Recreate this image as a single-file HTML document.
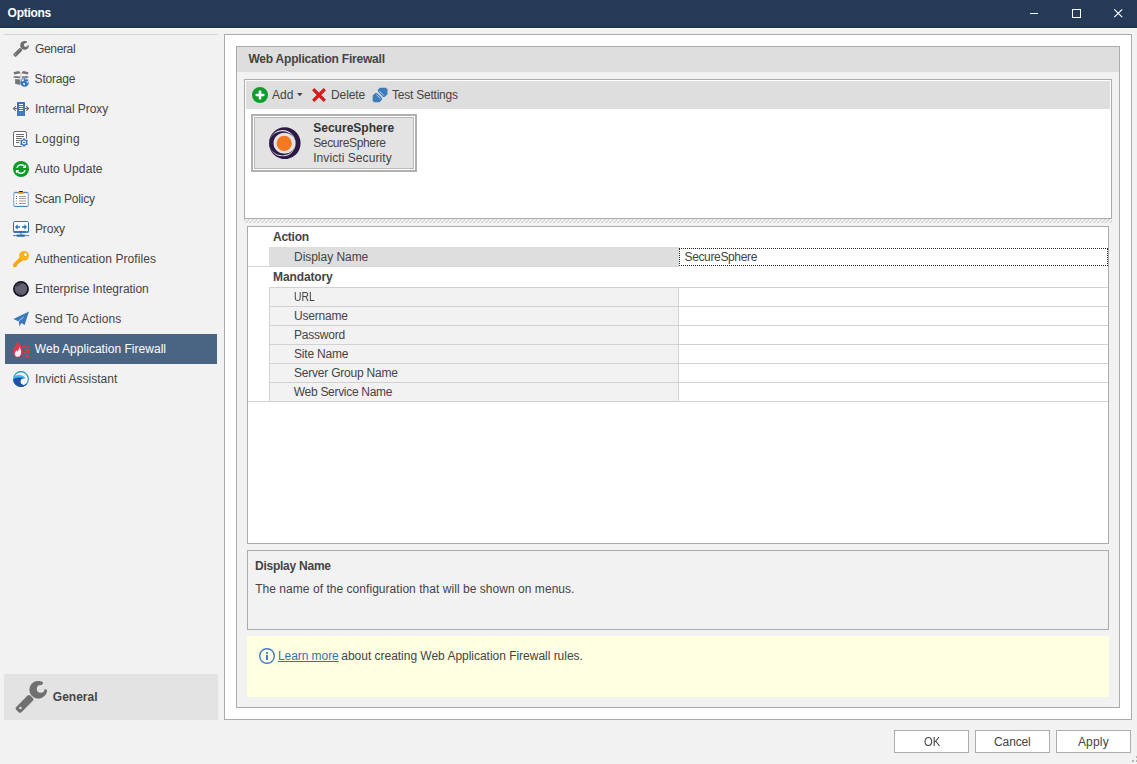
<!DOCTYPE html>
<html><head><meta charset="utf-8"><title>Options</title>
<style>
html,body{margin:0;padding:0;background:#f2f2f2}
body{width:1137px;height:764px;position:relative;overflow:hidden;background:#f2f2f2;font:12px/14px "Liberation Sans",sans-serif}
div,span,svg{position:absolute;box-sizing:border-box}
.t{white-space:pre;font:12px/14px "Liberation Sans",sans-serif}
.b{border:1px solid #ababab}
.btn{border:1px solid #adadad;background:#fff;width:75px;height:23px;top:730px}
.hl{height:1px;background:#d2d2d2}
</style></head>
<body>
<div style="left:0;top:0;width:1137px;height:27px;background:#253a57"></div>
<div style="left:0;top:27px;width:1137px;height:1px;background:#15304f"></div>
<div style="left:0;top:28px;width:1137px;height:1px;background:#fdfdfd"></div>
<div style="left:4px;top:34px;width:214px;height:1px;background:#d4d4d4"></div>
<div style="left:5px;top:334px;width:212px;height:30px;background:#4a6584"></div>
<div style="left:4px;top:674px;width:214px;height:46px;background:#e3e3e3"></div>
<div class="b" style="left:224px;top:34px;width:908px;height:686px;background:#fff"></div>
<div class="b" style="left:236px;top:46px;width:884px;height:662px;background:#f2f2f2"></div>
<div style="left:237px;top:47px;width:882px;height:25px;background:#dedede"></div>
<div class="b" style="left:244px;top:79px;width:868px;height:140px;background:#fff"></div>
<div style="left:246px;top:81px;width:864px;height:28px;background:#dedede"></div>
<div style="left:251px;top:114px;width:166px;height:58px;border:2px solid #b0b0b0;background:#fff"></div>
<div style="left:254px;top:117px;width:160px;height:52px;border:1px solid #b8b8b8;background:#e3e3e3"></div>
<svg style="left:244px;top:219px" width="868" height="4" shape-rendering="crispEdges"><defs><pattern id="hp" width="4" height="4" patternUnits="userSpaceOnUse"><g fill="#d8d8d8"><rect x="0" y="0" width="2" height="1"/><rect x="3" y="1" width="2" height="1"/><rect x="-1" y="1" width="2" height="1"/><rect x="2" y="2" width="2" height="1"/><rect x="1" y="3" width="2" height="1"/></g></pattern></defs><rect width="868" height="4" fill="url(#hp)"/></svg>
<div class="b" style="left:247px;top:226px;width:862px;height:318px;background:#fff"></div>
<div style="left:269px;top:247px;width:410px;height:19px;background:#dedede"></div>
<div class="hl" style="left:248px;top:266px;width:431px;background:#d6d6d6"></div>
<div style="left:679px;top:248px;width:429px;height:18px;border:1px dotted #222"></div>
<div style="left:269px;top:287px;width:410px;height:114px;background:#f2f2f2;border-left:1px solid #d2d2d2;border-right:1px solid #d2d2d2"></div>
<div class="hl" style="left:269px;top:287px;width:839px"></div>
<div class="hl" style="left:269px;top:306px;width:839px"></div>
<div class="hl" style="left:269px;top:325px;width:839px"></div>
<div class="hl" style="left:269px;top:344px;width:839px"></div>
<div class="hl" style="left:269px;top:363px;width:839px"></div>
<div class="hl" style="left:269px;top:382px;width:839px"></div>
<div class="hl" style="left:248px;top:401px;width:860px"></div>
<div class="b" style="left:247px;top:550px;width:862px;height:80px;background:#f2f2f2"></div>
<div style="left:247px;top:636px;width:862px;height:61px;background:#ffffe1"></div>
<div class="btn" style="left:894px"></div>
<div class="btn" style="left:975px"></div>
<div class="btn" style="left:1056px"></div>
<div style="left:1132px;top:760px;width:2px;height:2px;background:#b4b4b4"></div>
<div style="left:1136px;top:760px;width:1px;height:2px;background:#b4b4b4"></div>
<div style="left:1136px;top:756px;width:1px;height:2px;background:#b4b4b4"></div>
<svg style="left:13px;top:41px" width="16" height="16" viewBox="0 0 16 16"><defs><mask id="wm1"><rect x="-1" y="-1" width="18" height="18" fill="#fff"/><circle cx="12.85" cy="3.9" r="1.95" fill="#000"/><path d="M12.86 3.16 L14.8 -0.65 L18 -1 L17.2 5.03 Z" fill="#000"/></mask></defs>
<g fill="#6f6f6f"><circle cx="11.6" cy="4.4" r="4.45" mask="url(#wm1)"/>
<rect x="0" y="-1.86" width="10" height="3.72" rx="1" transform="translate(8.3 7.9) rotate(135)"/></g>
<circle cx="2.7" cy="13.5" r="0.5" fill="#c4c4c4"/></svg>
<svg style="left:13px;top:71px" width="16" height="16" viewBox="0 0 16 16"><g fill="#757575">
<path d="M0.5 1.3 L5.4 0.1 L7.1 1 L7 2.5 L1.3 3.5 Z"/><path d="M15.5 1.3 L10.6 0.1 L8.9 1 L9 2.5 L14.7 3.5 Z"/>
<path d="M-0.1 6.1 L2.2 4.9 L7.1 5.6 L6.8 7.2 L1.5 6.7 Z"/><path d="M16.1 6.1 L13.8 4.9 L8.9 5.6 L9.2 7.2 L14.5 6.7 Z"/>
<path d="M2.1 7.9 L7.1 8.6 L7.1 14 L2.1 12.7 Z"/><path d="M8.9 8.6 L13.9 7.9 L13.9 12 L8.9 14 Z" fill="#8a8a8a"/>
</g>
<path d="M2.4 3.6 L7.6 2.7 L8.4 2.7 L13.6 3.6 L8 4.9 Z" fill="#fdfdfd"/>
<path d="M7.4 1.2 L8.6 1.2 L8.6 14 L7.4 14 Z" fill="#c9c9c9"/>
<circle cx="11.55" cy="11.4" r="4.7" fill="#e4edf7"/>
<circle cx="11.55" cy="11.4" r="4.25" fill="#3674bb"/>
<path d="M8.3 9.4 L10.7 8 L11.2 9.4 L9 10.6 Z M13.4 10.6 L15.4 9.8 L15.7 11.3 L13.8 11.8 Z M10 11.8 L11.9 12.2 L11.9 14.2 L10.4 13.8 Z M12 7.6 L13.6 8 L12.8 9 Z" fill="#f2f6fb"/></svg>
<svg style="left:13px;top:101px" width="16" height="16" viewBox="0 0 16 16"><rect x="3.6" y="0.6" width="8.8" height="14.8" rx="0.8" fill="#fbf6ee"/>
<rect x="4" y="1" width="8" height="14" rx="0.6" fill="#3775b5"/>
<rect x="4.6" y="10.6" width="6.8" height="3.8" fill="#427fbb"/>
<g fill="#fff"><rect x="6" y="3" width="4" height="1"/><rect x="6" y="5" width="4" height="1"/><rect x="6" y="7" width="4" height="1"/><rect x="6" y="9" width="4" height="1"/></g>
<g stroke="#6b6b6b" stroke-width="1.1" fill="none" stroke-linecap="round" stroke-linejoin="round"><path d="M0.4 7.5 H4 M2.4 5.6 L0.5 7.5 L2.4 9.4"/><path d="M15.6 7.5 H12 M13.6 5.6 L15.5 7.5 L13.6 9.4"/></g></svg>
<svg style="left:13px;top:131px" width="16" height="16" viewBox="0 0 16 16"><rect x="0.5" y="0.5" width="13" height="15" rx="1.6" fill="#fff" stroke="#6a6a6a" stroke-width="1"/>
<g fill="#6a6a6a"><rect x="3" y="3" width="8" height="1"/><rect x="3" y="5" width="8" height="1"/><rect x="3" y="7" width="6" height="1"/><rect x="3" y="9" width="4" height="1"/><rect x="3" y="11" width="4" height="1"/></g>
<circle cx="11" cy="11.4" r="4.6" fill="#f6f6f6"/>
<g fill="#2f72b8"><circle cx="11" cy="11.4" r="3.2"/>
<rect x="10.1" y="7.2" width="1.8" height="8.4" rx="0.5"/>
<rect x="10.1" y="7.2" width="1.8" height="8.4" rx="0.5" transform="rotate(60 11 11.4)"/>
<rect x="10.1" y="7.2" width="1.8" height="8.4" rx="0.5" transform="rotate(120 11 11.4)"/></g>
<circle cx="11" cy="11.4" r="2.1" fill="#eaf0f7"/><ellipse cx="11" cy="11.4" rx="1" ry="0.6" fill="#2f72b8"/></svg>
<svg style="left:13px;top:161px" width="16" height="16" viewBox="0 0 16 16"><circle cx="8" cy="8" r="8" fill="#0b9c24"/>
<g fill="none" stroke="#fff" stroke-width="1.5"><path d="M3.9 6.8 A4.3 4.3 0 0 1 11.6 5.6"/><path d="M12.1 9.2 A4.3 4.3 0 0 1 4.4 10.4"/></g>
<path d="M13.1 3.6 L13.1 7 L9.7 7 Z" fill="#fff"/><path d="M2.9 12.4 L2.9 9 L6.3 9 Z" fill="#fff"/></svg>
<svg style="left:13px;top:191px" width="16" height="16" viewBox="0 0 16 16"><rect x="0.65" y="1.5" width="14.7" height="14" rx="1.5" fill="#fffdfb" stroke="#93b3da" stroke-width="1.3"/>
<path d="M1.6 1.5 H14.4" stroke="#4b84c4" stroke-width="1.1"/><path d="M1.6 15.5 H14.4" stroke="#4b84c4" stroke-width="1.1"/>
<rect x="5" y="0.9" width="5.8" height="1.9" fill="#d9991c"/><rect x="6" y="0" width="3.8" height="1.1" rx="0.4" fill="#1a1a1a"/>
<g fill="#9a9a9a"><rect x="6" y="5" width="7" height="1"/><rect x="6" y="7" width="7" height="1"/><rect x="6" y="12" width="7" height="1"/></g>
<rect x="6" y="9" width="7" height="2" fill="#cfcfcf"/><rect x="3" y="9" width="1" height="2" fill="#d4d4d4"/>
<g fill="#6a6a6a"><rect x="3" y="5" width="1" height="1"/><rect x="3" y="7" width="1" height="1"/><rect x="3" y="12" width="1" height="1"/></g></svg>
<svg style="left:13px;top:221px" width="16" height="16" viewBox="0 0 16 16"><rect x="0.5" y="0.5" width="15" height="11" rx="1.3" fill="#fbf9f6" stroke="#3472b6" stroke-width="1"/>
<rect x="0.5" y="10" width="15" height="1.8" rx="0.8" fill="#3472b6"/>
<rect x="13.2" y="10.3" width="0.6" height="1.2" fill="#dfe8f3"/>
<g fill="#2f6db3"><path d="M2 6 L4.6 3.2 L4.6 5.2 L7 5.2 L7 6.8 L4.6 6.8 L4.6 8.8 Z"/><path d="M14 6 L11.4 3.2 L11.4 5.2 L9 5.2 L9 6.8 L11.4 6.8 L11.4 8.8 Z"/>
<rect x="7.5" y="11.5" width="1" height="2.2"/><rect x="3.4" y="13.4" width="8.6" height="2.4" rx="1.2"/><rect x="0" y="14.2" width="16" height="0.9"/></g></svg>
<svg style="left:13px;top:251px" width="16" height="16" viewBox="0 0 16 16"><path d="M6.5 6.6 L9.4 9.2 L8 10.6 L7.2 10.4 L6.4 12 L5.6 12 L4.8 13.6 L3.8 13.8 L3.2 15.9 L0.1 15.9 L0.1 13.0 Z" fill="#f6a80f"/>
<path d="M9.4 9.2 L8 10.6 L7.2 10.4 L6.4 12 L5.6 12 L4.8 13.6 L3.8 13.8 L3.2 15.9 L1.8 15.9 L8.6 8.5 Z" fill="#e2930a"/>
<circle cx="11.05" cy="4.85" r="4.95" fill="#fdb216"/>
<circle cx="12.4" cy="3.6" r="1.95" fill="#e6a51c"/><circle cx="12.45" cy="3.55" r="1.5" fill="#f8f8fc"/></svg>
<svg style="left:13px;top:281px" width="16" height="16" viewBox="0 0 16 16"><circle cx="8" cy="8" r="7.95" fill="#15142a"/><circle cx="8" cy="8" r="6.2" fill="#62616f"/>
<path d="M2.6 5 A6.2 6.2 0 0 1 9.2 1.9 L9.2 2.8 L3.4 5.9 Z" fill="#403e4e"/><path d="M2.8 11.2 L8.8 13 L8.8 14.1 A6.2 6.2 0 0 1 2.8 11.2 Z" fill="#494756"/></svg>
<svg style="left:13px;top:311px" width="16" height="16" viewBox="0 0 16 16"><path d="M16 0.6 L0.4 7.9 L4.6 9.9 L6.0 10.4 L6.3 15.3 L8.6 12.0 L11.6 14.0 Z" fill="#3b78b9"/>
<path d="M5.6 10.2 L10.6 5.9" stroke="#c6d8ec" stroke-width="0.9"/></svg>
<svg style="left:13px;top:341px" width="16" height="16" viewBox="0 0 16 16"><path d="M4.5 0.2 C5.4 2.2 7.6 3.6 8.8 6.2 C10.4 9.4 9.9 13.2 7.2 15.4 C5.6 16.2 3.2 16.2 1.8 15.2 C-0.4 13.4 -0.6 10.2 0.8 7.6 C2.2 5.2 3.6 3.2 4.5 0.2 Z" fill="#e8344b"/>
<path d="M6.6 5.8 C7.6 8 8.4 10.4 8 12.6 C7.7 14.4 6.6 15.7 5 15.8 C3.4 15.9 2 14.9 1.8 13.2 C1.6 11.6 2.6 10.4 3.4 9.2 L4.5 10.8 C5.3 9.2 6.2 7.8 6.6 5.8 Z" fill="#f3f5f6"/>
<g fill="#ff2b3d"><rect x="9.6" y="5" width="3.4" height="1.9"/><rect x="14.1" y="5" width="1.9" height="1.9"/><rect x="12" y="8" width="4" height="1.9"/><rect x="11.1" y="11" width="1.9" height="1.9"/><rect x="14.1" y="11" width="1.9" height="1.9"/><rect x="12" y="14" width="4" height="1.9"/><rect x="9.8" y="14.8" width="1.1" height="1.1"/></g></svg>
<svg style="left:13px;top:371px" width="16" height="16" viewBox="0 0 16 16"><defs><linearGradient id="wg" x1="0" y1="0" x2="0" y2="1"><stop offset="0" stop-color="#48d0f6"/><stop offset="0.55" stop-color="#1c7fd6"/><stop offset="1" stop-color="#1f4fa4"/></linearGradient>
<clipPath id="wc"><circle cx="8" cy="8" r="7.9"/></clipPath></defs>
<circle cx="8" cy="8" r="7.4" fill="#f4f4f4" stroke="#1f8cbd" stroke-width="1.1"/>
<g clip-path="url(#wc)"><path d="M-1 8 C1 4.6 4.4 3.4 7.6 4 C10 4.5 11.8 5.9 12.8 7.8 C10.6 6.8 8.4 7.6 7.6 9.4 C6.8 11.4 8 13.6 10.4 13.9 C12 14.1 13.4 13.4 14.4 12.4 L14 17 L-1 17 Z" fill="url(#wg)"/>
<path d="M-1 10 C1 7.4 4 6.4 7 6.6 C9 6.8 10.4 7 11.4 7.3 C9.4 7.3 8 8.2 7.6 9.4 C6.8 11.4 8 13.6 10.4 13.9 C12 14.1 13.4 13.4 14.4 12.4 L14 17 L-1 17 Z" fill="#2150a4"/></g></svg>
<svg style="left:15px;top:681px" width="32" height="32" viewBox="0 0 16 16"><defs><mask id="wm2"><rect x="-1" y="-1" width="18" height="18" fill="#fff"/><circle cx="12.85" cy="3.9" r="1.95" fill="#000"/><path d="M12.86 3.16 L14.8 -0.65 L18 -1 L17.2 5.03 Z" fill="#000"/></mask></defs>
<g fill="#707070"><circle cx="11.6" cy="4.4" r="4.45" mask="url(#wm2)"/>
<rect x="0" y="-1.86" width="10" height="3.72" rx="1" transform="translate(8.3 7.9) rotate(135)"/></g>
<circle cx="2.7" cy="13.5" r="0.6" fill="#e3e3e3"/></svg>
<svg style="left:252px;top:87px" width="16" height="16" viewBox="0 0 16 16"><circle cx="8" cy="8" r="8" fill="#0c9d2b"/><rect x="3.6" y="6.7" width="8.8" height="2.6" rx="0.6" fill="#fff"/><rect x="6.7" y="3.6" width="2.6" height="8.8" rx="0.6" fill="#fff"/></svg>
<svg style="left:297px;top:93px" width="6" height="4" viewBox="0 0 6 4"><path d="M0 0 L5.6 0 L2.8 3.2 Z" fill="#444"/></svg>
<svg style="left:312px;top:88px" width="14" height="14" viewBox="0 0 14 14"><path d="M1.2 1.2 L12.8 12.8 M12.8 1.2 L1.2 12.8" stroke="#d61a1c" stroke-width="3.3"/></svg>
<svg style="left:372px;top:87px" width="16" height="16" viewBox="0 0 16 16"><path d="M7.8 0.7 L14.1 0.7 L15.5 2.3 L15.5 7.3 L12.6 10.1 L11 9.9 L5.9 4.6 L6.1 2.6 Z" fill="#3d7bb9"/>
<path d="M3.4 6.0 L5 6.0 L10.1 11.1 L9.9 12.7 L7.5 15.3 L2.2 15.3 L0.7 13.6 L0.7 8.6 Z" fill="#3d7bb9"/>
<path d="M7.6 4.4 L11.5 8.3 M4.5 7.7 L8.2 11.5" stroke="#b9d1ea" stroke-width="1" stroke-linecap="round"/>
<circle cx="14.6" cy="1.4" r="0.7" fill="#a9a9a0"/><circle cx="1.5" cy="14.8" r="0.7" fill="#a9a9a0"/></svg>
<svg style="left:259px;top:648px" width="16" height="16" viewBox="0 0 16 16"><circle cx="8" cy="8" r="7.3" fill="none" stroke="#3f7dc7" stroke-width="1.4"/><rect x="7" y="4" width="2" height="1.8" fill="#3f7dc7"/><rect x="7" y="6.9" width="2" height="5.1" fill="#3f7dc7"/></svg>
<svg style="left:268.7px;top:126.6px" width="32" height="32.4" viewBox="0 0 32 32.4"><path fill="#2c1a46" d="M15.8 0.1999999999999993 A15.8 16 0 1 1 15.8 32.2 A15.8 16 0 1 1 15.8 0.1999999999999993 Z M13.6 3.0999999999999996 A13.1 13.1 0 1 0 13.6 29.299999999999997 A13.1 13.1 0 1 0 13.6 3.0999999999999996 Z"/>
<path fill="#2c1a46" d="M13.4 4.200000000000001 A13.2 12.1 0 1 1 13.4 28.4 A13.2 12.1 0 1 1 13.4 4.200000000000001 Z M15.5 5.800000000000001 A11.0 10.5 0 1 0 15.5 26.8 A11.0 10.5 0 1 0 15.5 5.800000000000001 Z"/>
<circle cx="15.2" cy="16.4" r="7.65" fill="#f47820"/></svg>
<svg style="left:1025px;top:5px" width="105" height="18" viewBox="0 0 105 18"><g stroke="#fff" fill="none" stroke-width="1"><path d="M5 8.5 H13" /><rect x="47.5" y="4.5" width="8" height="8"/><path d="M89.3 4.3 L97.2 12.2 M97.2 4.3 L89.3 12.2" stroke-width="1.2"/></g></svg>
<span class="t" style="left:7.6px;top:6.2px;color:#ffffff;letter-spacing:-0.283px;font-weight:bold">Options</span>
<span class="t" style="left:35.1px;top:42px;color:#444444;letter-spacing:-0.367px">General</span>
<span class="t" style="left:34.6px;top:72px;color:#444444;letter-spacing:-0.183px">Storage</span>
<span class="t" style="left:35.0px;top:102px;color:#444444;letter-spacing:-0.062px">Internal Proxy</span>
<span class="t" style="left:35.0px;top:132px;color:#444444;letter-spacing:0.317px">Logging</span>
<span class="t" style="left:34.8px;top:162px;color:#444444;letter-spacing:0.1px">Auto Update</span>
<span class="t" style="left:34.6px;top:192px;color:#444444;letter-spacing:-0.24px">Scan Policy</span>
<span class="t" style="left:35.0px;top:222px;color:#444444;letter-spacing:-0.15px">Proxy</span>
<span class="t" style="left:34.8px;top:252px;color:#444444;letter-spacing:0.082px">Authentication Profiles</span>
<span class="t" style="left:35.1px;top:282px;color:#444444;letter-spacing:-0.052px">Enterprise Integration</span>
<span class="t" style="left:34.6px;top:312px;color:#444444;letter-spacing:0.05px">Send To Actions</span>
<span class="t" style="left:34.8px;top:342px;color:#ffffff;letter-spacing:0.03px">Web Application Firewall</span>
<span class="t" style="left:35.1px;top:372px;color:#444444;letter-spacing:0.012px">Invicti Assistant</span>
<span class="t" style="left:52.8px;top:690px;color:#444444;letter-spacing:-0.0px;font-weight:bold">General</span>
<span class="t" style="left:248.4px;top:52px;color:#444444;letter-spacing:-0.204px;font-weight:bold">Web Application Firewall</span>
<span class="t" style="left:272.0px;top:88px;color:#444444;letter-spacing:0.05px">Add</span>
<span class="t" style="left:331.1px;top:88px;color:#444444;letter-spacing:-0.14px">Delete</span>
<span class="t" style="left:391.9px;top:88px;color:#444444;letter-spacing:-0.217px">Test Settings</span>
<span class="t" style="left:313.2px;top:121px;color:#333333;letter-spacing:0.018px;font-weight:bold">SecureSphere</span>
<span class="t" style="left:313.2px;top:136px;color:#444444;letter-spacing:-0.355px">SecureSphere</span>
<span class="t" style="left:313.2px;top:151px;color:#444444;letter-spacing:0.073px">Invicti Security</span>
<span class="t" style="left:273.1px;top:230px;color:#444444;letter-spacing:-0.28px;font-weight:bold">Action</span>
<span class="t" style="left:294.0px;top:250px;color:#444444;letter-spacing:-0.036px">Display Name</span>
<span class="t" style="left:684.5px;top:250px;color:#444444;letter-spacing:-0.355px">SecureSphere</span>
<span class="t" style="left:273.1px;top:270px;color:#444444;letter-spacing:-0.125px;font-weight:bold">Mandatory</span>
<span class="t" style="left:293.94px;top:289.5px;color:#444444;transform:scaleX(0.861);transform-origin:0 0">URL</span>
<span class="t" style="left:294.0px;top:308.5px;color:#444444;letter-spacing:-0.214px">Username</span>
<span class="t" style="left:294.0px;top:327.5px;color:#444444;letter-spacing:-0.214px">Password</span>
<span class="t" style="left:294.0px;top:346.5px;color:#444444;letter-spacing:-0.188px">Site Name</span>
<span class="t" style="left:294.0px;top:365.5px;color:#444444;letter-spacing:-0.219px">Server Group Name</span>
<span class="t" style="left:293.8px;top:384.5px;color:#444444;letter-spacing:-0.3px">Web Service Name</span>
<span class="t" style="left:255.0px;top:559px;color:#444444;letter-spacing:-0.245px;font-weight:bold">Display Name</span>
<span class="t" style="left:255.2px;top:582px;color:#444444;letter-spacing:0.042px">The name of the configuration that will be shown on menus.</span>
<span class="t" style="left:277.9px;top:649px;color:#3572b0;letter-spacing:-0.056px;text-decoration:underline">Learn more</span>
<span class="t" style="left:341.3px;top:649px;color:#444444;letter-spacing:-0.022px">about creating Web Application Firewall rules.</span>
<span class="t" style="left:923.7px;top:735px;color:#444444;transform:scaleX(0.929);transform-origin:0 0">OK</span>
<span class="t" style="left:994.1px;top:735px;color:#444444;letter-spacing:-0.14px">Cancel</span>
<span class="t" style="left:1077.9px;top:735px;color:#444444;letter-spacing:0.2px">Apply</span>
</body></html>
